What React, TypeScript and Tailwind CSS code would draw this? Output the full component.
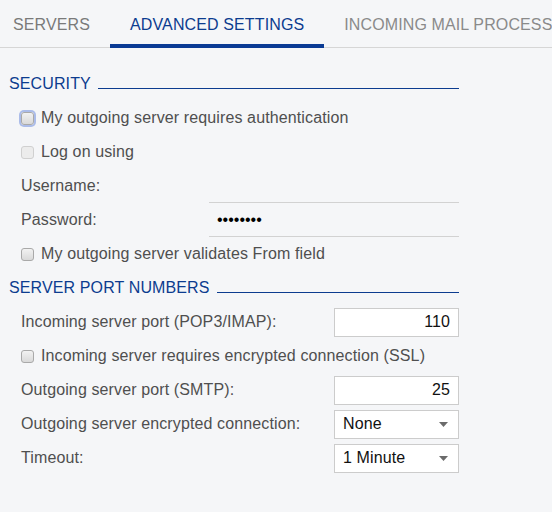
import React from "react";

function Box({ focus = false, disabled = false }: { focus?: boolean; disabled?: boolean }) {
  return (
    <span
      className={
        "inline-block w-[13px] h-[13px] rounded-[3px] border shrink-0 " +
        (disabled
          ? "border-[#d0d0d0] bg-[#ececec]"
          : "border-[#a9a9a9] bg-gradient-to-b from-[#f2f2f2] to-[#d9d9d9]") +
        (focus ? " shadow-[0_0_0_2px_rgba(110,140,220,0.55)]" : "")
      }
    />
  );
}

function CheckRow({ label, focus, disabled }: { label: string; focus?: boolean; disabled?: boolean }) {
  return (
    <div className="h-[34px] flex items-center pl-[21px] gap-[7px]">
      <Box focus={focus} disabled={disabled} />
      <span>{label}</span>
    </div>
  );
}

function Heading({ title }: { title: string }) {
  return (
    <div className="h-[34px] flex items-center pl-[9px] pr-[93px] text-[#0c3c8f]">
      <span>{title}</span>
      <span className="flex-1 ml-[7px] mt-[8px] h-px bg-[#0c3c8f]" />
    </div>
  );
}

function LineField({ label, value }: { label: string; value?: string }) {
  return (
    <div className="h-[34px] flex items-center pl-[21px] pr-[93px]">
      <span className="w-[188px]">{label}</span>
      <div className="flex-1 h-[34px] border-b border-[#d2d2d2] flex items-center pl-[8px] text-black tracking-normal">
        {value}
      </div>
    </div>
  );
}

function PortField({ label, value }: { label: string; value: string }) {
  return (
    <div className="h-[34px] flex items-center pl-[21px] pr-[93px]">
      <span className="flex-1">{label}</span>
      <div className="w-[125px] h-[29px] bg-white border border-[#cccccc] flex items-center justify-end pr-[8px] text-[#111]">
        {value}
      </div>
    </div>
  );
}

function SelectField({ label, value }: { label: string; value: string }) {
  return (
    <div className="h-[34px] flex items-center pl-[21px] pr-[93px]">
      <span className="flex-1">{label}</span>
      <div className="w-[125px] h-[29px] bg-white border border-[#cccccc] flex items-center justify-between pl-[8px] pr-[10px] text-[#111]">
        <span>{value}</span>
        <svg width="9" height="5" viewBox="0 0 9 5">
          <path d="M0 0 H9 L4.5 5 Z" fill="#6b6b6b" />
        </svg>
      </div>
    </div>
  );
}

export default function App() {
  return (
    <div className="w-[552px] h-[512px] bg-[#f5f6f8] text-[16px] tracking-[0.12px] text-[#4f4f4f] font-['Liberation_Sans',Arial,sans-serif] overflow-hidden">
      {/* Tabs */}
      <div className="h-[48px] flex border-b border-[#d6d6d6] whitespace-nowrap">
        <div className="pl-[13px] pr-5 flex items-center text-[#7a7a7a] pt-[2px]">SERVERS</div>
        <div className="px-5 flex items-center text-[#0c3c8f] border-b-4 border-[#0a3a94] mb-[-1px] pt-[6px]">
          ADVANCED SETTINGS
        </div>
        <div className="px-5 flex items-center text-[#8a8a8a] pt-[2px]">INCOMING MAIL PROCESSING</div>
      </div>

      <div className="pt-[19px]">
        <Heading title="SECURITY" />
        <CheckRow label="My outgoing server requires authentication" focus />
        <CheckRow label="Log on using" disabled />
        <LineField label="Username:" />
        <LineField label="Password:" value="••••••••" />
        <CheckRow label="My outgoing server validates From field" />

        <Heading title="SERVER PORT NUMBERS" />
        <PortField label="Incoming server port (POP3/IMAP):" value="110" />
        <CheckRow label="Incoming server requires encrypted connection (SSL)" />
        <PortField label="Outgoing server port (SMTP):" value="25" />
        <SelectField label="Outgoing server encrypted connection:" value="None" />
        <SelectField label="Timeout:" value="1 Minute" />
      </div>
    </div>
  );
}
